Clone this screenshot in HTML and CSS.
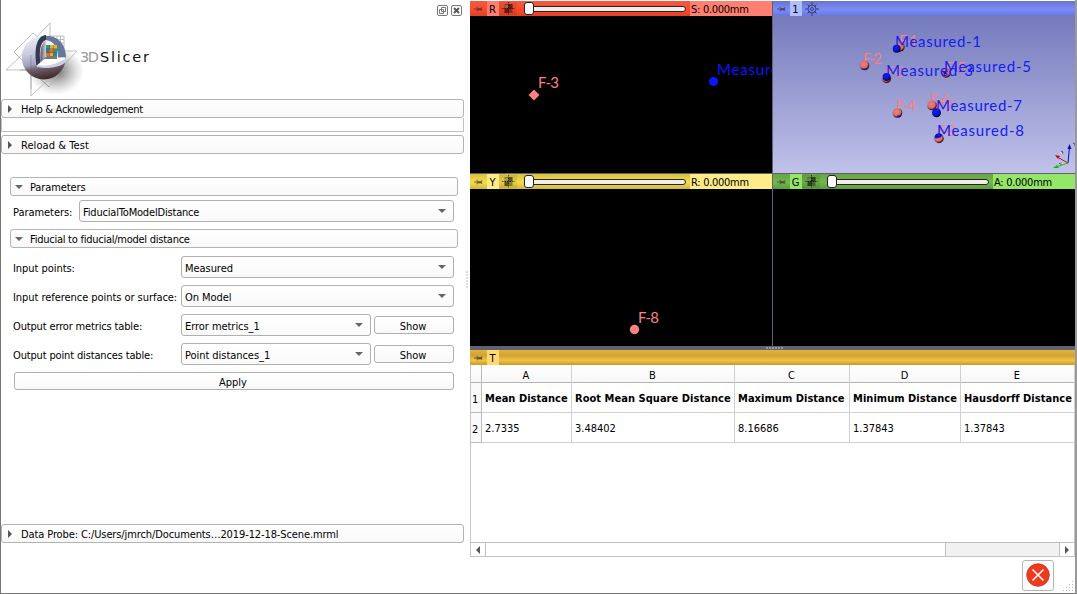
FILE: index.html
```html
<!DOCTYPE html>
<html lang="en">
<head>
<meta charset="utf-8">
<title>3D Slicer</title>
<link rel="stylesheet" href="styles.css">
</head>
<body>
<svg width="0" height="0" class="defs" aria-hidden="true">
  <defs>
    <symbol id="pin" viewBox="0 0 10 8"><path d="M0 4h3M3.500 1.500v5M8.500 2v4" stroke="#333" stroke-opacity=".75" fill="none"/><path d="M4 3h4v2.500H4z" fill="#333" fill-opacity=".75"/></symbol>
    <symbol id="fit" viewBox="0 0 13 13"><path d="M6.500 0v13M0 6.500h13" stroke="#000" stroke-opacity=".6" stroke-dasharray="1.500 1"/><path d="M2.500 2h8v9h-8z" fill="#000" fill-opacity=".35"/><path d="M6.500 2h4v4.500h-4zM2.500 6.500h4V11h-4z" fill="#000" fill-opacity=".35"/><path d="M3 3h3v3H3z" fill="#fff" fill-opacity=".2"/></symbol>
    <radialGradient id="pk" cx=".42" cy=".38" r=".65"><stop offset="0" stop-color="#f27e7a"/><stop offset=".6" stop-color="#d96d6b"/><stop offset=".85" stop-color="#4a1c1e"/><stop offset="1" stop-color="#200"/></radialGradient>
    <radialGradient id="bl" cx=".42" cy=".38" r=".65"><stop offset="0" stop-color="#101cf0"/><stop offset=".6" stop-color="#0a14cd"/><stop offset="1" stop-color="#001"/></radialGradient>
  </defs>
</svg>
<div class="window">
  <section class="panel">
    <div class="dock">
      <svg width="26" height="12" viewBox="0 0 26 12" fill="none" stroke="#777"><rect x=".5" y=".5" width="10" height="10" rx="1.500"/><path d="M4.500 2.500h4v4h-4zM2.500 4.500h4v4h-4z"/><rect x="14.500" y=".5" width="10" height="10" rx="1.500"/><path d="M17 3l5 5M22 3l-5 5" stroke="#555" stroke-width="1.900"/></svg>
    </div>
    <div class="brand">
      <svg class="logo" width="150" height="80" viewBox="0 0 150 80">
        <defs>
          <radialGradient id="shadow"><stop offset="0" stop-color="#222" stop-opacity=".7"/><stop offset="1" stop-color="#777" stop-opacity="0"/></radialGradient>
          <linearGradient id="ball" x1=".35" y1="0" x2=".55" y2="1"><stop offset="0" stop-color="#eceef6"/><stop offset=".4" stop-color="#c3c7db"/><stop offset=".62" stop-color="#9da1bb"/><stop offset=".75" stop-color="#6d5a65"/><stop offset="1" stop-color="#3a2527"/></linearGradient>
          <linearGradient id="inner"><stop offset="0" stop-color="#556"/><stop offset="1" stop-color="#e8e8ec"/></linearGradient>
        </defs>
        <ellipse cx="50" cy="49" rx="28" ry="24" fill="url(#shadow)"/>
        <g fill="none" stroke="#b0b0b0" stroke-width=".8">
          <path d="M0 48L22 27M0 48h60M38 29h33L59 42M44 14V1L25 21v53l20-19M8 30L27 11l12 10M8 30l14 14M59 43L43 65 25 48"/>
          <path d="M44 14h14v22M47.500 14v22M51 14v22M54.500 14v22M44 17.500h14M44 21h14M44 24.500h14M44 28h14"/>
        </g>
        <circle cx="37.800" cy="35.500" r="22" fill="url(#ball)"/>
        <path d="M38 14C31 13 28 27 30 44L60 35C60 22 51 14 38 14z" fill="#f0f1f5"/>
        <path d="M40 14C52 13 60 23 60 35l-8 .5C52 26 48 19 40 18z" fill="#66779c"/>
        <path d="M40 13C30 14 28 28 30.500 45l4-3C33 29 34 20 40 18z" fill="#363850"/>
        <path d="M40 18C34 22 34 31 34.500 42L41 34z" fill="url(#inner)"/>
        <path d="M30 44l10-8h20q-1 7-14 9-8 2-16-1z" fill="#fff"/>
        <path d="M30.500 43q15 3 29.500-7v4q-9 8-29 5z" fill="#c9d0e8"/>
        <path d="M41 34h10v3H37z" fill="#777"/>
        <g><path d="M40 23h11v11H40z" fill="#e5732c"/><path d="M40 23h4v4h-4zM47.500 27H51v4h-3.500z" fill="#2c9f72"/><path d="M44 23h7v4h-7zM44 31h3.500v3H44z" fill="#e5b928"/><path d="M40 27h3v4h-3zM47.500 31H51v3h-3.500z" fill="#297fbd"/><path d="M43.700 23v11M47.300 23v11M40 26.700h11M40 30.400h11" stroke="#444" stroke-width=".4"/></g>
        <path d="M25 33v34M25 48l18 17M14 48h11L37 36" fill="none" stroke="#555" stroke-width=".5" opacity=".6"/>
        <g class="wordmark"><text x="74" y="39.500" fill="#999" textLength="19">3D</text><text x="94" y="39.500" fill="#111" textLength="49">Slicer</text></g>
      </svg>
    </div>
    <div class="group wide"><i class="tri right"></i><span class="t-help">Help &amp; Acknowledgement</span></div>
    <div class="empty"></div>
    <div class="group wide reload"><i class="tri right"></i><span class="t-reload">Reload &amp; Test</span></div>
    <div class="group params"><i class="tri down"></i><span>Parameters</span></div>
    <div class="row first"><label class="short">Parameters:</label><div class="combo"><span class="t-node">FiducialToModelDistance</span><i class="tri down"></i></div></div>
    <div class="group fiducial"><i class="tri down"></i><span class="t-fid">Fiducial to fiducial/model distance</span></div>
    <div class="rows">
      <div class="row"><label>Input points:</label><div class="combo"><span>Measured</span><i class="tri down"></i></div></div>
      <div class="row"><label>Input reference points or surface:</label><div class="combo"><span>On Model</span><i class="tri down"></i></div></div>
      <div class="row"><label class="t-tight">Output error metrics table:</label><div class="combo"><span>Error metrics_1</span><i class="tri down"></i></div><button>Show</button></div>
      <div class="row"><label class="t-tight">Output point distances table:</label><div class="combo"><span>Point distances_1</span><i class="tri down"></i></div><button>Show</button></div>
    </div>
    <button class="apply">Apply</button>
    <div class="group wide probe"><i class="tri right"></i><span class="t-probe">Data Probe: C:/Users/jmrch/Documents…2019-12-18-Scene.mrml</span></div>
  </section>
  <div class="handle"></div>
  <section class="main">
    <div class="views">
      <div class="view">
        <div class="bar red"><svg class="pin"><use href="#pin"/></svg><b>R</b><span class="fit"><svg width="13" height="13"><use href="#fit"/></svg></span><span class="slider"><i></i></span><span class="value">S: 0.000mm</span></div>
        <svg class="canvas" width="302" height="157" viewBox="470 16 302 157"><path d="M534 89.500l5.500 5.500-5.500 5.500-5.500-5.500z" fill="#ff8080"/><circle cx="713.500" cy="81.500" r="4.500" fill="#0a14ff"/><g class="mark"><text x="538" y="88" fill="#ff8080" textLength="21">F-3</text><text x="717" y="75" fill="#0a14ff" textLength="87">Measured-3</text></g></svg>
      </div>
      <div class="view">
        <div class="bar blue"><svg class="pin"><use href="#pin"/></svg><b>1</b><svg class="gear" width="14" height="14" viewBox="0 0 14 14" fill="none" stroke="#394071"><circle cx="7" cy="7" r="4"/><circle cx="7" cy="7" r="1.500"/><path d="M7 0v3M7 11v3M0 7h3M11 7h3M2.500 2.500l2 2M9.500 9.500l2 2M11.500 2.500l-2 2M4.500 9.500l-2 2"/></svg></div>
        <svg class="canvas threed" width="302" height="157" viewBox="773 16 302 157">
          <g class="mark" fill="#f58088"><text x="899" y="46" textLength="19">F-1</text><text x="863" y="64" textLength="19">F-2</text><text x="885" y="77" textLength="19">F-3</text><text x="896" y="111" textLength="20">F-4</text><text x="945" y="73" textLength="21">F-5</text><text x="930" y="105" textLength="20">F-6</text><text x="935" y="112" textLength="19">F-7</text><text x="937" y="136" textLength="19">F-8</text></g>
          <g fill="url(#pk)"><circle cx="900" cy="47" r="4.700"/><circle cx="864.500" cy="65.500" r="4.800"/><circle cx="886.500" cy="78.500" r="4.700"/><circle cx="897.500" cy="113" r="4.800"/><circle cx="946" cy="73" r="4.700"/><circle cx="932" cy="105.500" r="4.800"/><circle cx="939" cy="138.500" r="4.700"/></g>
          <g fill="url(#bl)"><circle cx="896.700" cy="48.800" r="4"/><circle cx="886.500" cy="77" r="3.900"/><circle cx="936.500" cy="112.800" r="4.500"/></g>
          <path d="M934.500 138a4.500 4.500 0 0 1 8-3q-2 4-8 3zM943 71l5 2-4 2zM861.500 68q3 1.500 6 0-3 3-6 0zM897 115.500h4l-3 2z" fill="#0a14cd"/>
          <g class="mark" fill="#1420f0"><text x="895" y="47" textLength="86">Measured-1</text><text x="886" y="76" textLength="87">Measured-3</text><text x="944" y="72" textLength="87">Measured-5</text><text x="936" y="111" textLength="86">Measured-7</text><text x="937" y="136" textLength="87">Measured-8</text></g>
          <path d="M1068 163l1.500-16" stroke="#0508c8"/><path d="M1069.500 144l-2 5h4z" fill="#0508c8"/><path d="M1068 163l-9-5" stroke="#d81010"/><path d="M1055 155l5 1-2 3z" fill="#c00"/><path d="M1068 163l-12 4" stroke="#08d010"/><path d="M1053 168l4-3 2 3z" fill="#08c010"/><g fill="none" stroke="#333" stroke-width=".8"><path d="M1061 151l2 1-1 2M1059 164l2-2v3M1073 143l2 1v2"/><path d="M1060 152l2 2M1060 162l3 2" stroke="#eee"/></g>
        </svg>
      </div>
      <div class="view">
        <div class="bar yellow"><svg class="pin"><use href="#pin"/></svg><b>Y</b><span class="fit"><svg width="13" height="13"><use href="#fit"/></svg></span><span class="slider"><i></i></span><span class="value">R: 0.000mm</span></div>
        <svg class="canvas" width="302" height="157" viewBox="470 189 302 157"><circle cx="634.500" cy="329.500" r="4.700" fill="#ff8080"/><g class="mark"><text x="638" y="323" fill="#ff8080" textLength="21">F-8</text></g></svg>
      </div>
      <div class="view">
        <div class="bar green"><svg class="pin"><use href="#pin"/></svg><b>G</b><span class="fit"><svg width="13" height="13"><use href="#fit"/></svg></span><span class="slider"><i></i></span><span class="value">A: 0.000mm</span></div>
        <div class="canvas"></div>
      </div>
    </div>
    <div class="splitter"><i></i></div>
    <div class="bar gold"><svg class="pin"><use href="#pin"/></svg><b>T</b></div>
    <div class="sheet">
      <table>
        <colgroup><col class="c0"><col class="c1"><col class="c2"><col class="c3"><col class="c4"><col class="c5"></colgroup>
        <tr class="head"><th></th><th>A</th><th>B</th><th>C</th><th>D</th><th>E</th></tr>
        <tr class="names"><th>1</th><td>Mean Distance</td><td>Root Mean Square Distance</td><td>Maximum Distance</td><td>Minimum Distance</td><td>Hausdorff Distance</td></tr>
        <tr><th>2</th><td>2.7335</td><td>3.48402</td><td>8.16686</td><td>1.37843</td><td>1.37843</td></tr>
      </table>
      <div class="scroll"><span><i class="tri left"></i></span><div class="thumb"></div><div class="track"></div><span><i class="tri right"></i></span></div>
    </div>
    <div class="status"><div class="error"><svg width="24" height="24" viewBox="0 0 24 24"><circle cx="12" cy="12" r="11.300" fill="#f13a1d" stroke="#b83a2b" stroke-width=".8"/><path d="M6.500 6.500l11 11M17.500 6.500l-11 11" stroke="#fff" stroke-width="1.600"/></svg></div><svg class="grip" width="11" height="11" viewBox="0 0 11 11"><path d="M9.500 0v11M6.500 3v8M3.500 6v5M.5 9v2" stroke="#bbb" stroke-dasharray="1 2"/></svg></div>
  </section>
</div>
</body>
</html>
```
FILE: styles.css
```css
* { box-sizing: border-box; }
body { margin: 0; width: 1077px; height: 594px; overflow: hidden; background: #fff; color: #000; font: 11px/13px "DejaVu Sans Condensed", "DejaVu Sans", sans-serif; font-stretch: condensed; }
svg { display: block; flex: none; }
.defs { position: absolute; }
.window { display: flex; width: 1077px; height: 594px; border: solid #777; border-width: 0 2px 1px 1px; border-right-color: #999; }
.panel { width: 464px; height: 593px; display: flex; flex-direction: column; flex: none; }
.dock { height: 22px; padding: 5px 0 0 436px; }
.brand { height: 77px; padding-left: 5px; }
.logo { overflow: visible; }
.wordmark { font: 14.5px "DejaVu Sans", sans-serif; }
.group { height: 19px; flex: none; margin: 0 7px 0 9px; border: 1px solid #b3b3b3; border-radius: 3px; background: linear-gradient(#fff, #f8f8f8); display: flex; align-items: center; padding-left: 4px; white-space: nowrap; }
.group span { margin-left: 7px; padding-top: 1px; letter-spacing: -.1px; }
.group .t-help { letter-spacing: -.28px; }
.group .t-reload { letter-spacing: .07px; }
.group .t-fid { letter-spacing: -.25px; }
.group .t-probe { letter-spacing: -.11px; }
.group.wide { margin: 0 1px 0 0; padding-left: 6px; }
.group.wide span { margin-left: 9px; }
.empty { height: 14px; margin-right: 1px; border: 1px solid #c0c0c0; border-top: 0; flex: none; }
.group.reload { margin-top: 3px; }
.group.params { margin-top: 23px; }
.group.fiducial { margin-top: 7px; }
.tri { width: 0; height: 0; border: 4px solid transparent; flex: none; }
.tri.right { border-left: 4px solid #555; border-right: 0; }
.tri.left { border-right: 4px solid #555; border-left: 0; }
.tri.down { border-top: 4px solid #666; border-bottom: 0; }
.row { display: flex; align-items: center; height: 22px; padding: 0 11px 0 12px; }
.row.first { margin-top: 4px; }
.row label { width: 168px; flex: none; white-space: nowrap; padding-top: 2px; letter-spacing: -.05px; }
.row label.short { width: 66px; }
.row label.t-tight { letter-spacing: -.15px; }
.combo { flex: 1; height: 22px; display: flex; align-items: center; justify-content: space-between; border: 1px solid #b0b0b0; border-radius: 3px; background: linear-gradient(#fff, #f9f9f9); padding: 0 7px 0 3px; white-space: nowrap; letter-spacing: -.05px; }
.combo span { padding-top: 2px; }
.combo .t-node { letter-spacing: -.18px; }
.rows { display: flex; flex-direction: column; gap: 7px; margin-top: 8px; }
button { width: 80px; height: 18px; margin: 0 0 0 3px; padding: 2px 2px 0 0; border: 1px solid #b0b0b0; border-radius: 3px; background: linear-gradient(#fff, #f9f9f9); font: inherit; color: inherit; }
.apply { width: 440px; margin: 7px 0 0 13px; flex: none; }
.group.probe { margin-top: auto; margin-bottom: 50px; }
.handle { width: 5px; height: 18px; margin-top: 271px; flex: none; background: radial-gradient(circle at 2px 1px, #ccc 0 .6px, transparent .9px) 0 0 / 5px 3px; }
.main { width: 605px; height: 593px; padding-top: 1px; display: flex; flex-direction: column; flex: none; }
.views { display: grid; grid-template-columns: 302px 302px; column-gap: 1px; row-gap: 1px; background: #626075; height: 345px; flex: none; }
.view { overflow: hidden; height: 172px; }
.bar { height: 15px; display: flex; align-items: center; }
.pin { width: 9px; height: 8px; margin: 0 4px 0 4px; }
.bar b { width: 12px; height: 15px; line-height: 17px; font-weight: normal; text-align: center; flex: none; padding-right: 1px; }
.fit { height: 13px; width: 18px; margin-right: 5px; padding-left: 3px; flex: none; background: rgba(0,0,0,.07); }
.slider { width: 162px; height: 6px; margin-left: 2px; border: 1px solid #222; border-radius: 3px; background: #f3ecea; display: flex; align-items: center; flex: none; }
.slider i { width: 10px; height: 13px; border: 1px solid #222; border-radius: 3px; background: #fff; flex: none; margin-left: -1px; }
.value { flex: 1; height: 15px; line-height: 17px; margin-left: 4px; padding-left: 1px; white-space: nowrap; letter-spacing: -.28px; }
.red { background: linear-gradient(#f15a44, #ff4a2c 55%, #e0402b); }
.red b, .red .value { background: #ff8070; }
.yellow { background: linear-gradient(#d8c13e, #f5dc4b 55%, #cfb83d); }
.yellow b, .yellow .value { background: #ffeb88; }
.green { background: linear-gradient(#67a344, #73b84c 55%, #609a40); }
.green b, .green .value { background: #94e668; }
.blue { background: linear-gradient(#6474cf, #7b8cf8 55%, #6978d8); }
.blue b { background: #b0bdff; }
.blue .gear { margin-left: 3px; }
.gold { background: linear-gradient(#e0b53a, #d0a334 35%, #efc340 70%, #c69a30); flex: none; }
.gold b { background: #ffda70; }
.canvas { width: 302px; height: 157px; background: #000; }
.threed { background: linear-gradient(#757abd, #c0c2e9); }
.mark { font: 15px Lato, sans-serif; }
.splitter { height: 4px; background: #626075; display: flex; justify-content: center; padding: 1px 0 0 4px; flex: none; }
.splitter i { width: 18px; height: 2px; background: repeating-linear-gradient(90deg, #999 0 2px, transparent 2px 3px); }
.sheet { height: 192px; flex: none; border: 1px solid #c5c5c5; border-top: 0; display: flex; flex-direction: column; width: 605px; }
table { border-collapse: separate; border-spacing: 0; table-layout: fixed; width: 604px; flex: none; }
.c0 { width: 11px; } .c1 { width: 90px; } .c2 { width: 163px; } .c3 { width: 115px; } .c4 { width: 111px; } .c5 { width: 114px; }
th, td { height: 30px; padding: 0; border-right: 1px solid #d0d0d0; border-bottom: 1px solid #d0d0d0; font-weight: normal; white-space: nowrap; text-align: left; }
td { padding: 2px 0 0 3px; }
th:first-child { padding-left: 1px; background: #fafafa; border-color: #bbb; padding-top: 3px; }
.head th { height: 18px; text-align: center; background: linear-gradient(#fff, #f7f7f7); border-bottom-color: #b5b5b5; padding: 3px 1px 0 0; }
.names td { font-weight: bold; letter-spacing: .04px; }
.scroll { height: 14px; margin-top: auto; border-top: 1px solid #c0c0c0; display: flex; }
.scroll span { width: 14px; display: flex; align-items: center; justify-content: center; }
.thumb { width: 461px; border: solid #c0c0c0; border-width: 0 1px; }
.track { flex: 1; background: #f1f1f1; border-right: 1px solid #c0c0c0; }
.status { flex: 1; display: flex; justify-content: flex-end; padding-top: 3px; }
.error { width: 32px; height: 31px; border: 1px solid #b5b5b5; border-radius: 3px; display: flex; align-items: center; padding: 0 0 1px 3px; }
.grip { margin: 21px 1px 0 9px; }
```
